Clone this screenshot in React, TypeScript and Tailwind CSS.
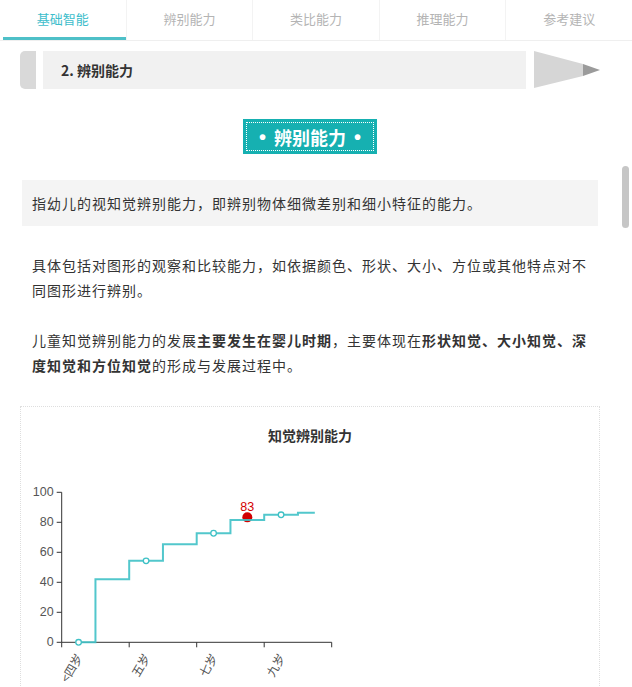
import React from 'react';

const TABS = ['基础智能', '辨别能力', '类比能力', '推理能力', '参考建议'];

const CJK = { fontFamily: '"Noto Sans CJK SC", "Noto Sans", sans-serif' };

// chart geometry, page coordinates
const X0 = 61.7;
const X1 = 331.7;
const Y0 = 643.3;
const PER = 1.5;
const CAT = (X1 - X0) / 8;
const DATA = [0, 42, 54.3, 65.3, 72.7, 81.5, 85, 86.4];
const LABELS = ['<四岁', '四岁', '五岁', '六岁', '七岁', '八岁', '九岁', '十岁'];

const cx = (i: number) => X0 + (i + 0.5) * CAT;
const cy = (v: number) => Y0 - v * PER;

function stepPath() {
  let d = `M${cx(0)},${cy(DATA[0])}`;
  for (let i = 1; i < DATA.length; i++) {
    const mid = X0 + i * CAT;
    d += ` H${mid} V${cy(DATA[i])} H${cx(i)}`;
  }
  return d;
}

const Chart = () => {
  const yTicks = [0, 20, 40, 60, 80, 100];
  const xTicks = [0, 2, 4, 6, 8];
  return (
    <svg width={578} height={290} viewBox="21 408 578 290" className="block">
      <text x={310} y={436} textAnchor="middle" dominantBaseline="central" fontSize={14} fontWeight={700} fill="#333" style={CJK}>
        知觉辨别能力
      </text>
      {/* y axis */}
      <line x1={X0} y1={cy(100)} x2={X0} y2={Y0} stroke="#333" strokeWidth={1} />
      {yTicks.map((t) => (
        <g key={t}>
          <line x1={X0 - 5} y1={cy(t)} x2={X0} y2={cy(t)} stroke="#333" strokeWidth={1} />
          <text x={X0 - 8} y={cy(t)} textAnchor="end" dominantBaseline="central" fontSize={12.5} fill="#555" fontFamily="'Liberation Sans', Arial, sans-serif">
            {t}
          </text>
        </g>
      ))}
      {/* x axis */}
      <line x1={X0} y1={Y0} x2={X1} y2={Y0} stroke="#333" strokeWidth={1} />
      {xTicks.map((t) => (
        <line key={t} x1={X0 + t * CAT} y1={Y0} x2={X0 + t * CAT} y2={Y0 + 5} stroke="#333" strokeWidth={1} />
      ))}
      {[0, 2, 4, 6].map((i) => (
        <text
          key={i}
          x={cx(i)}
          y={Y0 + 12}
          textAnchor="end"
          dominantBaseline="central"
          fontSize={12}
          fill="#555"
          transform={`rotate(-60 ${cx(i)} ${Y0 + 12})`}
          style={CJK}
        >
          {LABELS[i]}
        </text>
      ))}
      {/* score marker */}
      <circle cx={cx(5)} cy={cy(83.3)} r={5} fill="#d10000" />
      <text x={cx(5)} y={cy(83.3) - 10} textAnchor="middle" dominantBaseline="central" fontSize={12.5} fill="#d40000" fontFamily="'Liberation Sans', Arial, sans-serif">
        83
      </text>
      <path d={stepPath()} fill="none" stroke="#3fc1c6" strokeWidth={2} strokeOpacity={0.9} />
      {[0, 2, 4, 6].map((i) => (
        <circle key={i} cx={cx(i)} cy={cy(DATA[i])} r={2.8} fill="#fff" stroke="#3fc1c6" strokeWidth={1.3} />
      ))}
    </svg>
  );
};

export default function App() {
  return (
    <div className="relative w-[632px] h-[687px] overflow-hidden bg-white text-[#333]" style={CJK}>
      {/* tabs */}
      <div className="flex h-[41px] border-b border-[#efefef]">
        {TABS.map((t, i) => (
          <div key={t} className={`flex-1 flex flex-col ${i < TABS.length - 1 ? 'border-r border-[#f3f3f3]' : ''}`}>
            <div className={`flex-1 flex items-center justify-center text-[13px] ${i === 0 ? 'text-[#3dbdcb]' : 'text-[#b4b4b4]'}`}>
              {t}
            </div>
            <div className={`h-[3px] ml-[3px] ${i === 0 ? 'bg-[#4ec0c8]' : ''}`} />
          </div>
        ))}
      </div>

      {/* section banner */}
      <div className="flex h-[38px] mt-[10px] ml-[20px] mr-[32px]">
        <div className="w-[16px] bg-[#d9d9d9] rounded-l-[5px]" />
        <div className="flex-1 ml-[7px] bg-[#f1f1f1] flex items-center pl-[18px] text-[14px] font-bold text-[#333]">
          2. 辨别能力
        </div>
        <svg width={66} height={38} viewBox="0 0 66 38" className="ml-[8px] shrink-0">
          <polygon points="0,0 49,13 49,25 0,37" fill="#d6d6d6" />
          <polygon points="49,13 66,19 49,25" fill="#9b9b9b" />
        </svg>
      </div>

      {/* title badge */}
      <div className="mt-[30px] ml-[243px] w-[134px] h-[35px] bg-[#16b0b1] p-[3px]">
        <div className="h-full border border-dotted border-white flex items-center justify-center gap-[8px] text-white font-bold">
          <span className="text-[20px] leading-none" style={{ fontFamily: '"Liberation Sans", Arial, sans-serif' }}>•</span>
          <span className="text-[18px] leading-none">辨别能力</span>
          <span className="text-[20px] leading-none" style={{ fontFamily: '"Liberation Sans", Arial, sans-serif' }}>•</span>
        </div>
      </div>

      {/* definition */}
      <div className="mt-[26px] ml-[22px] w-[576px] h-[46px] bg-[#f4f4f4] px-[10px] flex items-center text-[14px] tracking-[1px]">
        指幼儿的视知觉辨别能力，即辨别物体细微差别和细小特征的能力。
      </div>

      <div className="px-[32px] mt-[27px] text-[14px] leading-[25px] tracking-[1px]">
        <p>具体包括对图形的观察和比较能力，如依据颜色、形状、大小、方位或其他特点对不同图形进行辨别。</p>
        <p className="mt-[25px]">
          儿童知觉辨别能力的发展<b>主要发生在婴儿时期</b>，主要体现在<b>形状知觉、大小知觉、深度知觉和方位知觉</b>的形成与发展过程中。
        </p>
      </div>

      {/* chart card */}
      <div className="mt-[28px] ml-[20px] w-[580px] h-[320px] border border-dotted border-[#dedede]">
        <Chart />
      </div>

      {/* scrollbar thumb */}
      <div className="absolute left-[622px] top-[166px] w-[7px] h-[62px] rounded-full bg-[#c6c6c6]" />
    </div>
  );
}
